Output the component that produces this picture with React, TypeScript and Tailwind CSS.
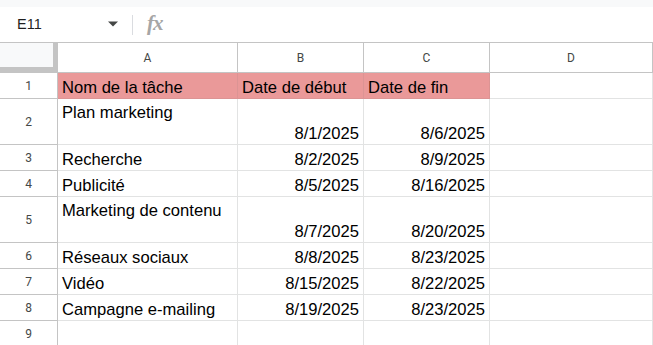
const rows = [
  { n: 1, a: "Nom de la tâche", b: "Date de début", c: "Date de fin", head: true, tall: false },
  { n: 2, a: "Plan marketing", b: "8/1/2025", c: "8/6/2025", tall: true },
  { n: 3, a: "Recherche", b: "8/2/2025", c: "8/9/2025", tall: false },
  { n: 4, a: "Publicité", b: "8/5/2025", c: "8/16/2025", tall: false },
  { n: 5, a: "Marketing de contenu", b: "8/7/2025", c: "8/20/2025", tall: true },
  { n: 6, a: "Réseaux sociaux", b: "8/8/2025", c: "8/23/2025", tall: false },
  { n: 7, a: "Vidéo", b: "8/15/2025", c: "8/22/2025", tall: false },
  { n: 8, a: "Campagne e-mailing", b: "8/19/2025", c: "8/23/2025", tall: false },
  { n: 9, a: "", b: "", c: "", tall: false },
]

export default function App() {
  return (
    <div className="w-[653px] h-[345px] overflow-hidden bg-white font-['Liberation_Sans',Arial,sans-serif] text-[16.6px] text-black">
      {/* top strip */}
      <div className="h-[7px] bg-[#f8f9fa]" />

      {/* formula bar */}
      <div className="h-[36px] flex items-center border-b border-[#c4c4c4]">
        <div className="w-[104px] pl-[17px] text-[14.5px] text-[#1f1f1f]">E11</div>
        <svg width="12" height="8" viewBox="0 0 12 8" className="mt-[-2px] ml-[3px]">
          <path d="M1 1.5h10L6 6.5z" fill="#444746" />
        </svg>
        <div className="ml-[13px] w-px h-[20px] bg-[#dadce0]" />
        <div className="ml-[14px] mt-[-2px] text-[21px] italic font-bold text-[#a6a6a6] font-['Liberation_Serif',serif] leading-none tracking-[-1px]">
          fx
        </div>
      </div>

      {/* column headers */}
      <div className="flex h-[30px] border-b border-[#c4c4c4] font-['Roboto',sans-serif] text-[12px] text-[#444746]">
        <div className="w-[58px] shrink-0 bg-[#c4c4c4]">
          <div className="w-[53px] h-[24px] bg-[#f8f9fa]" />
        </div>
        <div className="w-[180px] shrink-0 border-r border-[#c4c4c4] flex items-center justify-center">A</div>
        <div className="w-[126px] shrink-0 border-r border-[#c4c4c4] flex items-center justify-center">B</div>
        <div className="w-[126px] shrink-0 border-r border-[#c4c4c4] flex items-center justify-center">C</div>
        <div className="w-[163px] shrink-0 border-r border-[#c4c4c4] flex items-center justify-center">D</div>
      </div>

      {/* data rows */}
      {rows.map((r) => (
        <div key={r.n} className={`flex ${r.tall ? "h-[46px]" : "h-[26px]"}`}>
          <div className="w-[58px] shrink-0 border-r border-b border-[#c4c4c4] flex items-center justify-center font-['Roboto',sans-serif] text-[12px] text-[#444746]">
            {r.n}
          </div>
          <div
            className={`w-[180px] shrink-0 border-r border-b flex px-[4px] leading-[19px] whitespace-nowrap ${
              r.tall ? "items-start pt-[4px]" : "items-end pb-[1px]"
            } ${r.head ? "bg-[#ea9999] border-[#dc9494]" : "border-[#e2e3e3]"}`}
          >
            {r.a}
          </div>
          <div
            className={`w-[126px] shrink-0 border-r border-b flex items-end pb-[1px] px-[4px] leading-[19px] whitespace-nowrap ${
              r.head ? "bg-[#ea9999] border-[#dc9494] justify-start" : "border-[#e2e3e3] justify-end"
            }`}
          >
            {r.b}
          </div>
          <div
            className={`w-[126px] shrink-0 border-r border-b flex items-end pb-[1px] px-[4px] leading-[19px] whitespace-nowrap ${
              r.head ? "bg-[#ea9999] border-[#dc9494] justify-start" : "border-[#e2e3e3] justify-end"
            }`}
          >
            {r.c}
          </div>
          <div className="w-[163px] shrink-0 border-r border-b border-[#e2e3e3]" />
        </div>
      ))}
    </div>
  )
}
